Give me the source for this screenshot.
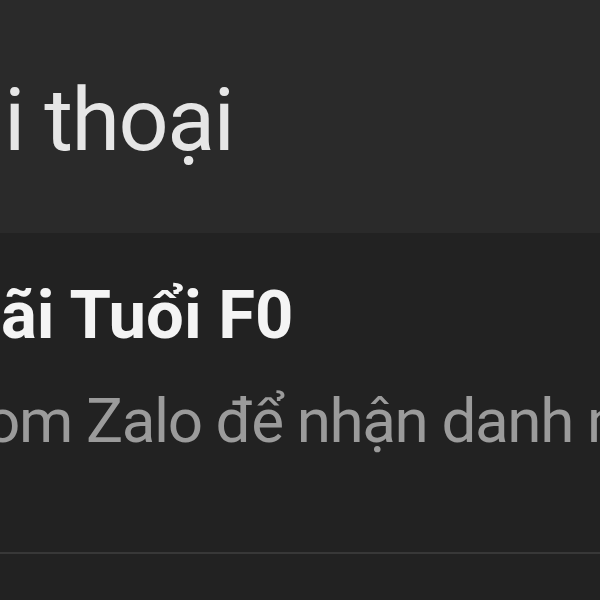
export default function App() {
  return (
    <div
      className="w-[600px] h-[600px] overflow-hidden bg-[#222222]"
      style={{ fontFamily: "Roboto, 'Noto Sans', sans-serif" }}
    >
      <div className="h-[233px] bg-[#2a2a2a] pt-[76px] whitespace-nowrap">
        <div className="text-[88px] leading-none tracking-[-1.5px] text-[#e6e6e6] ml-[4px]">i thoại</div>
      </div>
      <div className="whitespace-nowrap">
        <div className="pt-[49px] text-[67px] leading-none font-bold text-[#f4f4f4] ml-[1px]">
          ãi Tuổi F0
        </div>
        <div className="mt-[41px] text-[62px] leading-none tracking-[-1.4px] text-[#9b9b9b] ml-[-15px]">
          om Zalo để nhận danh mục
        </div>
        <div className="mt-[100px] h-[2px] bg-[#383838]" />
      </div>
    </div>
  );
}
